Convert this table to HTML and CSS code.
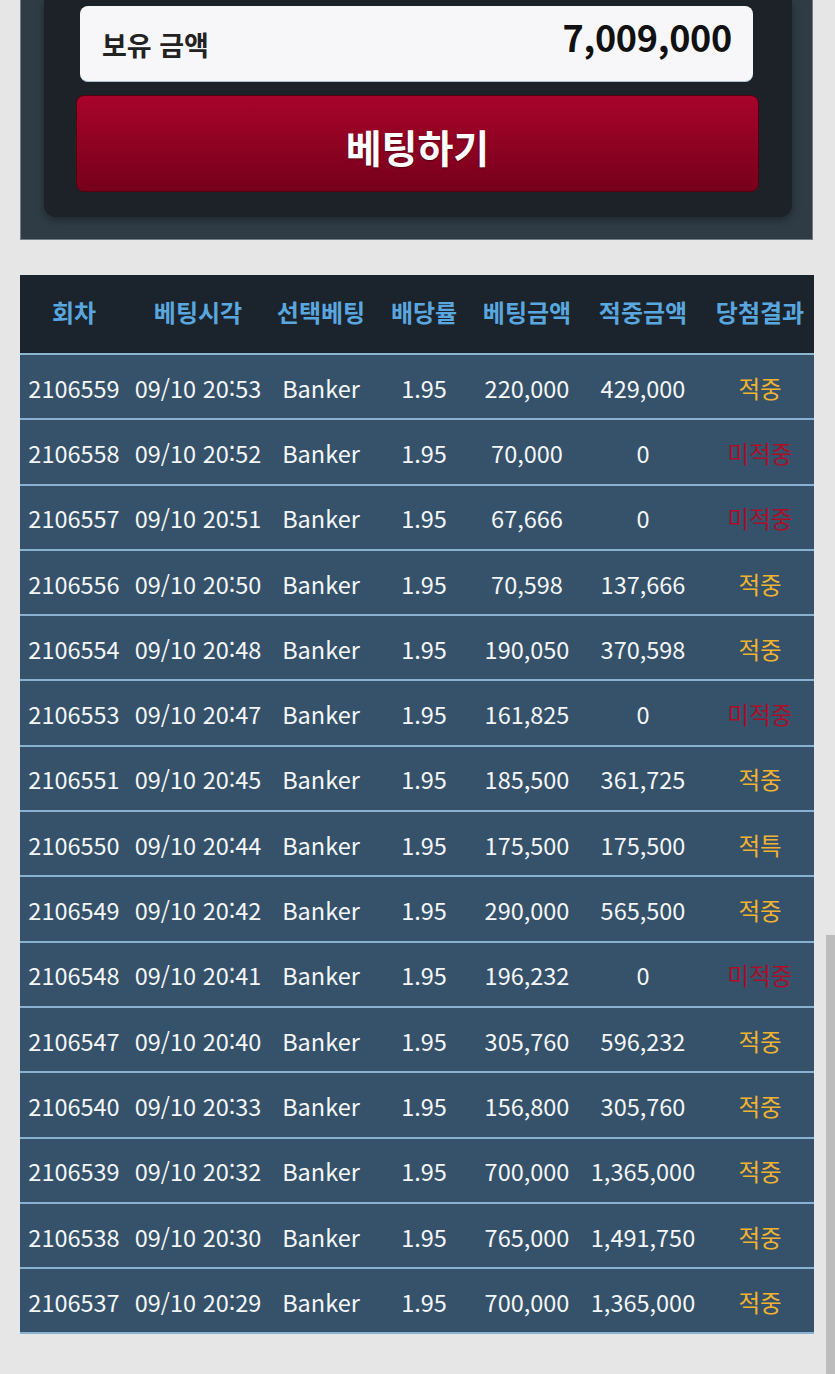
FILE: index.html
```html
<!DOCTYPE html>
<html lang="ko">
<head>
<meta charset="utf-8">
<link rel="stylesheet" href="styles.css">
</head>
<body>
<section class="bet-panel">
  <div class="bet-inner">
    <div class="balance">
      <span class="balance-label">보유 금액</span>
      <span class="balance-value">7,009,000</span>
    </div>
    <button class="bet-button">베팅하기</button>
  </div>
</section>

<table class="history">
  <colgroup>
    <col class="c1"><col class="c2"><col class="c3"><col class="c4"><col class="c5"><col class="c6"><col class="c7">
  </colgroup>
  <thead>
    <tr><th>회차</th><th>베팅시각</th><th>선택베팅</th><th>배당률</th><th>베팅금액</th><th>적중금액</th><th>당첨결과</th></tr>
  </thead>
  <tbody>
    <tr><td>2106559</td><td>09/10 20:53</td><td>Banker</td><td>1.95</td><td>220,000</td><td>429,000</td><td class="win">적중</td></tr>
    <tr><td>2106558</td><td>09/10 20:52</td><td>Banker</td><td>1.95</td><td>70,000</td><td>0</td><td class="lose">미적중</td></tr>
    <tr><td>2106557</td><td>09/10 20:51</td><td>Banker</td><td>1.95</td><td>67,666</td><td>0</td><td class="lose">미적중</td></tr>
    <tr><td>2106556</td><td>09/10 20:50</td><td>Banker</td><td>1.95</td><td>70,598</td><td>137,666</td><td class="win">적중</td></tr>
    <tr><td>2106554</td><td>09/10 20:48</td><td>Banker</td><td>1.95</td><td>190,050</td><td>370,598</td><td class="win">적중</td></tr>
    <tr><td>2106553</td><td>09/10 20:47</td><td>Banker</td><td>1.95</td><td>161,825</td><td>0</td><td class="lose">미적중</td></tr>
    <tr><td>2106551</td><td>09/10 20:45</td><td>Banker</td><td>1.95</td><td>185,500</td><td>361,725</td><td class="win">적중</td></tr>
    <tr><td>2106550</td><td>09/10 20:44</td><td>Banker</td><td>1.95</td><td>175,500</td><td>175,500</td><td class="win">적특</td></tr>
    <tr><td>2106549</td><td>09/10 20:42</td><td>Banker</td><td>1.95</td><td>290,000</td><td>565,500</td><td class="win">적중</td></tr>
    <tr><td>2106548</td><td>09/10 20:41</td><td>Banker</td><td>1.95</td><td>196,232</td><td>0</td><td class="lose">미적중</td></tr>
    <tr><td>2106547</td><td>09/10 20:40</td><td>Banker</td><td>1.95</td><td>305,760</td><td>596,232</td><td class="win">적중</td></tr>
    <tr><td>2106540</td><td>09/10 20:33</td><td>Banker</td><td>1.95</td><td>156,800</td><td>305,760</td><td class="win">적중</td></tr>
    <tr><td>2106539</td><td>09/10 20:32</td><td>Banker</td><td>1.95</td><td>700,000</td><td>1,365,000</td><td class="win">적중</td></tr>
    <tr><td>2106538</td><td>09/10 20:30</td><td>Banker</td><td>1.95</td><td>765,000</td><td>1,491,750</td><td class="win">적중</td></tr>
    <tr><td>2106537</td><td>09/10 20:29</td><td>Banker</td><td>1.95</td><td>700,000</td><td>1,365,000</td><td class="win">적중</td></tr>
  </tbody>
</table>

<div class="scrollbar"></div>
</body>
</html>
```

FILE: styles.css
```css
html, body {
  margin: 0;
  padding: 0;
}
body {
  background: #e6e6e6;
  font-family: "Noto Sans CJK KR", "Noto Sans", sans-serif;
  width: 835px;
  height: 1374px;
  overflow: hidden;
  position: relative;
}

.bet-panel {
  margin: 0 22px 0 20px;
  height: 240px;
  background: #2f3c46;
  border: 1px solid #6f7e8a;
  border-top: none;
  box-sizing: border-box;
  padding: 0 20px 0 23px;
}
.bet-inner {
  background: #1c2227;
  border-radius: 0 0 12px 12px;
  box-shadow: 0 3px 8px rgba(0, 0, 0, 0.35);
  padding: 6px 33px 25px 32px;
}
.balance {
  margin: 0 6px 0 4px;
  height: 76px;
  box-sizing: border-box;
  background: #f7f7f9;
  border-radius: 8px;
  border-bottom: 1px solid #a9c3dc;
  display: flex;
  align-items: center;
  justify-content: space-between;
  padding: 0 21px 0 22px;
}
.balance-label {
  font-size: 27px;
  font-weight: 700;
  color: #222;
  padding-top: 2px;
}
.balance-value {
  font-size: 36px;
  font-weight: 700;
  color: #111;
  letter-spacing: -0.3px;
  padding-bottom: 16px;
}
.bet-button {
  display: block;
  width: 100%;
  margin-top: 13px;
  height: 97px;
  border: 1px solid #55000f;
  border-radius: 8px;
  background: linear-gradient(#a8042b, #76001a);
  color: #fff;
  font-family: inherit;
  font-size: 39px;
  font-weight: 700;
  text-shadow: 0 1px 2px rgba(0, 0, 0, 0.4);
  padding: 4px 0 0 0;
}

.history {
  margin: 35px 0 0 20px;
  width: 794px;
  border-collapse: collapse;
  table-layout: fixed;
}
.c1 { width: 108px; }
.c2 { width: 140px; }
.c3 { width: 106px; }
.c4 { width: 100px; }
.c5 { width: 106px; }
.c6 { width: 126px; }
.c7 { width: 108px; }

.history th {
  background: #1b242c;
  color: #5aa6df;
  font-size: 24px;
  font-weight: 700;
  height: 79px;
  padding: 0 0 6px 0;
  box-sizing: border-box;
  white-space: nowrap;
  border-bottom: 2px solid #8cb6d2;
}
.history td {
  background: #35526a;
  color: #f4f6f8;
  font-size: 23.5px;
  text-align: center;
  height: 65.3px;
  padding: 2px 0 0 0;
  box-sizing: border-box;
  white-space: nowrap;
  border-bottom: 2px solid #88b2d0;
}
.history td.win { color: #f0b232; }
.history td.lose { color: #a8102a; }

.scrollbar {
  position: absolute;
  right: 0;
  top: 935px;
  width: 9px;
  height: 439px;
  background: #bcbcbc;
}
```
